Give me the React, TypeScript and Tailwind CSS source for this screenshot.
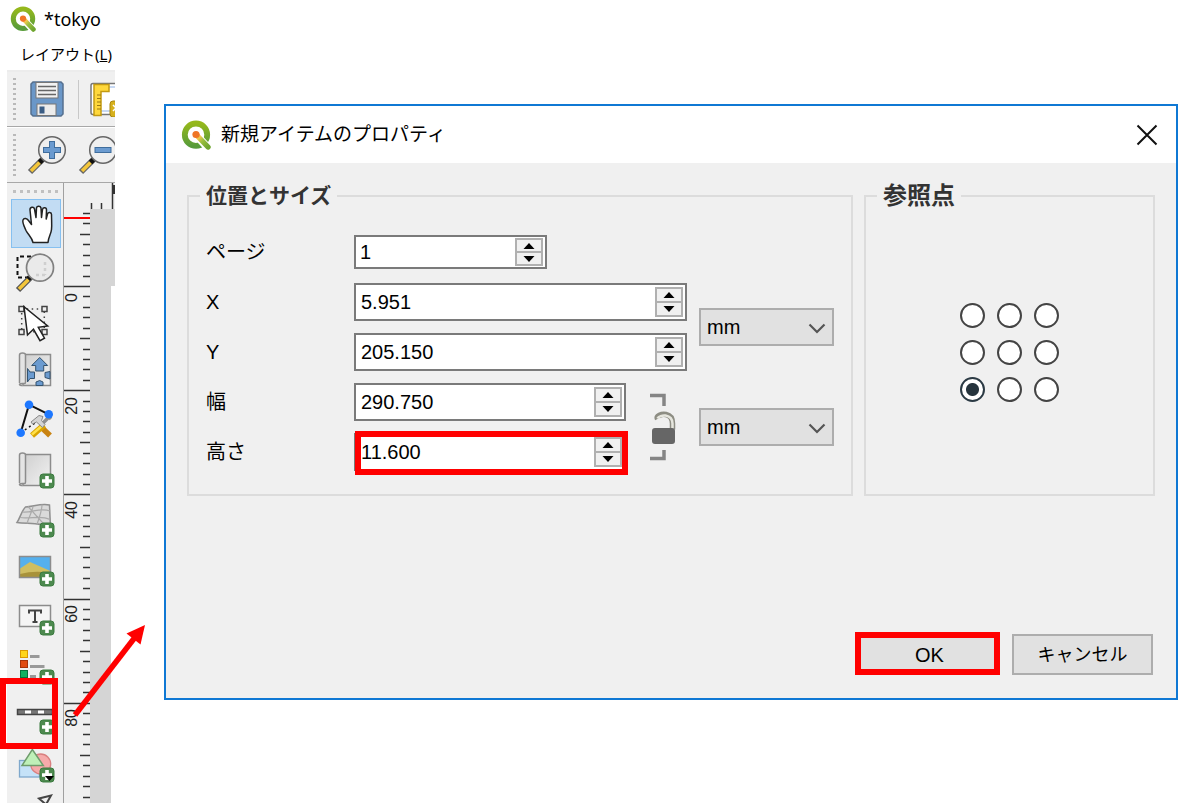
import React from "react";

const dialogFont = "font-['Liberation_Sans','Noto_Sans_CJK_JP',sans-serif]";
const kanaFont = "font-['Noto_Sans','Noto_Sans_CJK_JP',sans-serif]";

function QgisLogo({ className }: { className: string }) {
  return (
    <svg className={className} viewBox="0 0 30 30" fill="none" aria-hidden="true">
      <defs>
        <linearGradient id="leaf" x1="0" y1="0" x2="0" y2="1">
          <stop offset="0" stopColor="#95b81c" />
          <stop offset="1" stopColor="#589c3a" />
        </linearGradient>
        <linearGradient id="tail" x1="14" y1="14" x2="27" y2="27" gradientUnits="userSpaceOnUse">
          <stop offset="0" stopColor="#f07a1c" />
          <stop offset="0.3" stopColor="#f2c84c" />
          <stop offset="0.55" stopColor="#9bbf3e" />
          <stop offset="1" stopColor="#6fa52f" />
        </linearGradient>
      </defs>
      <circle cx="15" cy="14.700" r="11.200" stroke="url(#leaf)" strokeWidth="5.800" />
      <path d="M17.500 17.500 28.500 29.500" stroke="#fff" strokeWidth="8" />
      <path d="m16 15.500 11 11.500" stroke="url(#tail)" strokeWidth="5.400" strokeLinecap="round" />
      <circle cx="15" cy="14.500" r="3.600" fill="#ef7526" />
    </svg>
  );
}

function Badge({ y }: { y: number }) {
  return (
    <g>
      <rect x="29" y={y - 7} width="14" height="14" rx="3" fill="#4d8a4f" stroke="#3b7a3f" />
      <path d={`M36 ${y - 5}v10M31 ${y}h10`} stroke="#fff" strokeWidth="3.6" />
    </g>
  );
}

function Sheet() {
  return (
    <g stroke="#8c8c8c" strokeWidth="1.5">
      <path d="M12 8.500h27.500v31H12z" fill="url(#paper)" />
      <path d="M8.500 37V9q0-2 3-2t3 2v27q0 1.500-1 1.500H11q-2.500 0-2.500 1 0 1 3 1" fill="#e4e4e4" />
    </g>
  );
}

function HandIcon() {
  return (
    <path
      d="M22 43.500c-1-5-5-8-7-12-1.500-3.500-4-8-3-10.500 1-2.500 4-1.500 5.500.5l3 4L19 11c-.3-3 3.700-4 4.500-1l1.500 8.500.5-9.500c.2-2.500 4-2.500 4.500 0l.5 9.500 1-8c.4-2.500 4-2.300 4 .3l-.3 9.200 1.300-5c.6-2.300 4-2 4 .5 0 6 .5 10 0 15-.4 4.500-3 7-3.500 13z"
      fill="#fff"
      stroke="#222"
      strokeWidth="1.500"
      strokeLinejoin="round"
    />
  );
}

function ZoomAreaIcon() {
  return (
    <g fill="none">
      <path d="M20 8.500H6.500v21H18" stroke="#111" strokeWidth="2" strokeDasharray="4 3" />
      <path d="M20 29 7 42" stroke="#555" strokeWidth="6" />
      <path d="M17.500 31.500 8 41" stroke="#f4c63a" strokeWidth="3.500" />
      <path d="m21 27-4 4" stroke="#111" strokeWidth="5" />
      <circle cx="29" cy="19.700" r="13.500" fill="#eaeaea" stroke="#808080" strokeWidth="1.700" />
      <path d="M34 14v13M34 27H24" stroke="#cfcfcf" strokeWidth="2.500" strokeDasharray="3 3" />
    </g>
  );
}

function SelectIcon() {
  return (
    <g fill="none" stroke="#444" strokeWidth="1.500">
      <rect x="10.700" y="12" width="22.600" height="22.700" strokeDasharray="1.500 3.500" />
      <g fill="#f0f0f0">
        <rect x="8" y="9.500" width="5" height="5" />
        <rect x="31" y="9.500" width="5" height="5" />
        <rect x="8" y="32.500" width="5" height="5" />
        <rect x="31" y="32.500" width="5" height="5" />
      </g>
      <path
        d="m13 9.700 3.500 28.300 6-5.700 6.500 11.400 4.500-2.500-6.200-10.900 9.400-1.300z"
        fill="#fff"
        stroke="#222"
      />
    </g>
  );
}

function MoveContentIcon() {
  return (
    <g>
      <Sheet />
      <g fill="#6b9bd0" stroke="#34536f" strokeWidth="1">
        <path d="m28.700 11.500 8 8h-4V25h-8v-5.500h-4z" />
        <path d="M16.500 22.500 19 26h4.500v6.500H19l-2.500 3.500z" />
        <path d="M39 25.500V33l-5-1.500v-5z" />
        <path d="M25 39.500v-3.500l3.700-1.500 3.300 1.500v3.500z" />
      </g>
    </g>
  );
}

function EditNodesIcon() {
  return (
    <g fill="none">
      <path d="M9.700 35.700 18 7.700l19.700 9.600" stroke="#111" strokeWidth="2" />
      <path d="M9.700 35.700 27 24" stroke="#111" strokeWidth="1.500" strokeDasharray="2 3" />
      <path d="m29 29 10 9.500" stroke="#c98312" strokeWidth="5.500" />
      <path d="m31 27 7-7 2 2" stroke="#8f8f8f" strokeWidth="3.500" />
      <path d="M21 38.500 33 28" stroke="#d9a400" strokeWidth="6" />
      <path d="M21 37.500 32 28" stroke="#ffe14a" strokeWidth="2.500" />
      <path d="m20 25 8-6.500 4 1-1.500 4 3.500 4-2.500 3-6-5.500-4 2z" fill="#d4d4d4" stroke="#888" />
      <g fill="#1e78ff">
        <circle cx="18" cy="7.700" r="4.300" />
        <circle cx="37.700" cy="17.300" r="4.300" />
        <circle cx="9.700" cy="35.700" r="4.300" />
      </g>
    </g>
  );
}

function AddMapIcon() {
  return (
    <g>
      <Sheet />
      <Badge y={35} />
    </g>
  );
}

function Add3dIcon() {
  return (
    <g>
      <path
        d="M14.500 12c8-.5 16-4 24-2l1 23c-9-6-22-4-33.500-5.500C9 23 11 15 14.500 12z"
        fill="#dadada"
        stroke="#8f8f8f"
        strokeWidth="1.500"
      />
      <path
        d="M11.500 17c9 1 18-5 27.500-1M9 22.500c10 2 20-3 30 2M22 11.500c-1 6-4 10-6 17M31 9.500c0 7-3 13-5 20M17 11.500l18 20"
        fill="none"
        stroke="#aaa"
        strokeWidth="1.200"
      />
      <Badge y={35} />
    </g>
  );
}

function AddPictureIcon() {
  return (
    <g>
      <rect x="8.500" y="10.500" width="31" height="21" fill="#55b0ee" />
      <path d="M9 22.500 19 16l20.500 9v6H9z" fill="#cfbe62" />
      <path d="M9 28q15-4 30.500-1v4H9z" fill="#a8923a" />
      <rect x="8.500" y="10.500" width="31" height="21" fill="none" stroke="#8c8c8c" strokeWidth="1.500" />
      <Badge y={33} />
    </g>
  );
}

function AddLabelIcon() {
  return (
    <g>
      <rect x="8.500" y="10.500" width="31" height="21" fill="#f5f5f5" stroke="#8c8c8c" strokeWidth="1.500" />
      <path d="M18 18.500v-3h12v3M24 15.500V27M21.500 27h5" fill="none" stroke="#444" strokeWidth="2" />
      <Badge y={33} />
    </g>
  );
}

function AddLegendIcon() {
  return (
    <g>
      <rect x="9.500" y="6.500" width="7" height="7" fill="#ffd51a" stroke="#dc9a00" />
      <rect x="9.500" y="16.500" width="7" height="7" fill="#e04a10" stroke="#a63208" />
      <rect x="9.500" y="26.500" width="7" height="7" fill="#12b060" stroke="#08703a" />
      <path d="M19 12.500h9.500M19 22.500h14.500M19 32.500h6" stroke="#999" strokeWidth="3" />
      <Badge y={33} />
    </g>
  );
}

function AddScaleBarIcon() {
  return (
    <g>
      <rect x="6.500" y="16.500" width="35" height="5" fill="#777" stroke="#444" strokeWidth="1.500" />
      <path d="M14 19h6M27 19h6" stroke="#fff" strokeWidth="3" />
      <Badge y={34} />
    </g>
  );
}

function AddShapeIcon() {
  return (
    <g>
      <rect x="8.500" y="18.500" width="20" height="16.500" fill="#c5e2f8" stroke="#7fa8cc" strokeWidth="1.300" />
      <circle cx="29.700" cy="22" r="10" fill="#f6aaaa" stroke="#d98080" strokeWidth="1.300" />
      <path d="m21.300 7.500 11 16h-21.300z" fill="#bff0b8" stroke="#6f9c6c" strokeWidth="1.500" />
      <Badge y={33} />
      <path d="M34 34h9l-4.500 5z" fill="#000" />
    </g>
  );
}

type Tool = { name: string; icon: React.ReactNode; active?: boolean; marked?: boolean };

const toolGroups: Tool[][] = [
  [
    { name: "コンテンツをパン", icon: <HandIcon />, active: true },
    { name: "ズーム", icon: <ZoomAreaIcon /> },
    { name: "アイテムを選択", icon: <SelectIcon /> },
    { name: "コンテンツを移動", icon: <MoveContentIcon /> },
  ],
  [
    { name: "ノードを編集", icon: <EditNodesIcon /> },
    { name: "地図を追加", icon: <AddMapIcon /> },
    { name: "3Dマップを追加", icon: <Add3dIcon /> },
  ],
  [
    { name: "画像を追加", icon: <AddPictureIcon /> },
    { name: "ラベルを追加", icon: <AddLabelIcon /> },
    { name: "凡例を追加", icon: <AddLegendIcon /> },
    { name: "スケールバーを追加", icon: <AddScaleBarIcon />, marked: true },
    { name: "図形を追加", icon: <AddShapeIcon /> },
  ],
];

function ToolButton({ tool }: { tool: Tool }) {
  return (
    <button
      type="button"
      aria-label={tool.name}
      className={
        tool.active
          ? "relative block h-[49px] w-[50px] bg-[#c2dcf3] outline-1 -outline-offset-1 outline-[#86c0f0]"
          : "relative block h-[49px] w-[50px]"
      }
    >
      <svg className="block h-[49px] w-[50px]" viewBox="0 0 50 49" aria-hidden="true">
        {tool.icon}
      </svg>
      {tool.marked && (
        <span className="absolute -top-[15px] right-[3px] -bottom-[7px] -left-[11px] z-10 border-[6px] border-[#ff0000]" />
      )}
    </button>
  );
}

function Grip() {
  return (
    <span className="flex flex-col gap-[3px]">
      {Array.from({ length: 9 }, (_, i) => (
        <span key={i} className="h-[2px] w-[3px] bg-[#b9b9b9]" />
      ))}
    </span>
  );
}

function Magnifier({ minus }: { minus?: boolean }) {
  return (
    <svg className="h-10 w-10 shrink-0" viewBox="0 0 40 40" fill="none" aria-hidden="true">
      <path d="M15 25 3 37" stroke="#666" strokeWidth="6" />
      <path d="M13 27 4 36" stroke="#f4c63a" strokeWidth="3.500" />
      <path d="m16.500 23.500-4 4" stroke="#111" strokeWidth="5" />
      <circle cx="25" cy="15" r="13.300" fill="#efefef" stroke="#666" strokeWidth="1.500" />
      <path
        d={minus ? "M16.500 15h17" : "M25 6v18M16 15h18"}
        stroke="#3f6d9c"
        strokeWidth="6"
      />
      <path d={minus ? "M17.500 15h15" : "M25 7v16M17 15h16"} stroke="#6b9bd0" strokeWidth="4" />
    </svg>
  );
}

function SaveIcon() {
  return (
    <svg className="h-9 w-[34px] shrink-0" viewBox="0 0 34 36" aria-hidden="true">
      <path d="M3 1h28l2 2v30l-2 2H3l-2-2V3z" fill="#6a97c8" stroke="#55708f" strokeWidth="1.500" />
      <rect x="6" y="1.500" width="22" height="15.500" fill="#f2f2f2" stroke="#777" />
      <path d="M8 5.500h18M8 9.500h18M8 13.500h18" stroke="#666" strokeWidth="1.300" />
      <rect x="7" y="23" width="19" height="11.500" fill="#ececec" stroke="#777" />
      <rect x="9.500" y="25.500" width="5" height="7" fill="#3a5d85" />
    </svg>
  );
}

function LayoutIcon() {
  return (
    <svg className="h-9 w-9 shrink-0" viewBox="0 0 36 36" aria-hidden="true">
      <rect x="1" y="2.500" width="34" height="31" rx="2" fill="#fff" stroke="#777" strokeWidth="1.500" />
      <path d="M10 30h25M19 6h16" stroke="#8fb2e6" />
      <path d="M4 3.500h15v7h-8v24H4z" fill="#ffd83c" stroke="#c39a12" strokeWidth="1.500" />
      <path d="M7 14h4M7 17.500h4M7 21h4M7 24.500h4M7 28h4" stroke="#9c7a10" />
      <rect x="20" y="20" width="14" height="16" rx="3" fill="#d6b01c" stroke="#a88610" />
      <path d="M23 24l3 3-3 3" fill="none" stroke="#fff" strokeWidth="1.500" />
    </svg>
  );
}

function Rulers() {
  const zero = 103;
  const step = 10.42;
  const ticks = Array.from({ length: 58 }, (_, i) => i - 7);
  return (
    <svg className="block h-[620px] w-[51px]" viewBox="0 0 51 620" aria-hidden="true">
      <rect width="51" height="27" fill="#f0f0f0" />
      <rect y="26" width="26" height="594" fill="#f0f0f0" />
      <path d="M26 26h25v77h-4v517H26z" fill="#d5d5d5" />
      <path d="M27.500 20v6M37.500 20v6M48.500 0v26" stroke="#333" strokeWidth="1.500" />
      <path d="M50 2v9" stroke="#333" strokeWidth="2" />
      {ticks.map((k) => {
        const y = Math.round(zero + k * step);
        const x = k >= 0 && k % 10 === 0 ? 0 : k % 5 === 0 ? 16 : 19;
        return <path key={k} d={`M${x} ${y}.5H26`} stroke="#333" strokeWidth="1.500" />;
      })}
      <path d="M0 35h26" stroke="#ff0000" strokeWidth="2" />
      {["0", "20", "40", "60", "80"].map((t, i) => (
        <text
          key={t}
          transform={`translate(13 ${110 + i * 104}) rotate(-90)`}
          textAnchor="end"
          fontFamily="Liberation Sans, sans-serif"
          fontSize="16"
          fill="#222"
        >
          {t}
        </text>
      ))}
    </svg>
  );
}

function LayoutWindow() {
  return (
    <aside className="w-[115px] shrink-0 overflow-hidden">
      <header className={`flex h-[38px] items-center gap-2 pl-[10px] text-lg text-black ${kanaFont}`}>
        <QgisLogo className="h-[26px] w-[26px]" />
        <h1>*tokyo</h1>
      </header>
      <nav className={`flex h-8 items-center pl-5 text-[15px] ${kanaFont}`}>
        <a href="#layout" className="whitespace-nowrap text-black">
          レイアウト(<span className="underline">L</span>)
        </a>
      </nav>
      <div className="ml-[7px]">
        <div className="flex h-[57px] items-center gap-[14px] border-t-2 border-b border-t-[#ececec] border-b-[#a8a8a8] bg-[#f0f0f0] pl-[6px]">
          <Grip />
          <button type="button" aria-label="保存">
            <SaveIcon />
          </button>
          <span className="h-[39px] w-px shrink-0 bg-[#c8c8c8]" />
          <button type="button" aria-label="新規レイアウト" className="-ml-[3px]">
            <LayoutIcon />
          </button>
        </div>
        <div className="flex h-14 items-center gap-[11px] border-t border-b border-t-white border-b-[#a8a8a8] bg-[#f0f0f0] pl-[6px]">
          <Grip />
          <button type="button" aria-label="拡大">
            <Magnifier />
          </button>
          <button type="button" aria-label="縮小">
            <Magnifier minus />
          </button>
        </div>
        <div className="flex">
          <div className="w-[57px] shrink-0 border-r border-[#a0a0a0] bg-[#f0f0f0] pl-1">
            <div className="flex h-4 items-center gap-1 pl-[2px]">
              {Array.from({ length: 7 }, (_, i) => (
                <span key={i} className="h-[3px] w-[3px] bg-[#c0c0c0]" />
              ))}
            </div>
            <div className="flex flex-col gap-[2px]">
              {toolGroups.map((group, i) => (
                <div key={i}>
                  {group.map((tool) => (
                    <ToolButton key={tool.name} tool={tool} />
                  ))}
                </div>
              ))}
            </div>
            <svg className="block h-3 w-[50px]" viewBox="0 0 50 12" aria-hidden="true">
              <path d="m28 7.500 12-3-5 9z" fill="#f0f0f0" stroke="#444" strokeWidth="2" />
            </svg>
          </div>
          <Rulers />
        </div>
      </div>
    </aside>
  );
}

function SpinBox({
  id,
  label,
  value,
  short,
  marked,
}: {
  id: string;
  label: string;
  value: string;
  short?: boolean;
  marked?: boolean;
}) {
  return (
    <div className="flex h-[38px] items-center">
      <label htmlFor={id} className="w-[148px] shrink-0 text-xl text-black">
        {label}
      </label>
      <div
        className={
          short
            ? "relative flex h-[34px] w-[193px] border-2 border-[#7a7a7a] bg-white p-px pr-[2px]"
            : "relative flex h-[38px] min-w-0 flex-1 border-2 border-[#7a7a7a] bg-white p-[2px]"
        }
      >
        <input
          id={id}
          type="text"
          defaultValue={value}
          className="min-w-0 flex-1 bg-transparent pl-[3px] text-xl leading-7 text-black outline-none"
        />
        <span className="flex w-7 flex-col border-2 border-[#b0b0b0] bg-[#f0f0f0]">
          <button
            type="button"
            aria-label={`${label} を増やす`}
            className="flex flex-1 items-center justify-center border-b border-[#b0b0b0]"
          >
            <svg className="h-[6px] w-3" viewBox="0 0 12 6" aria-hidden="true">
              <path d="M6 0l5.500 6H.5z" />
            </svg>
          </button>
          <button
            type="button"
            aria-label={`${label} を減らす`}
            className="flex flex-1 items-center justify-center border-t border-[#b0b0b0]"
          >
            <svg className="h-[6px] w-3" viewBox="0 0 12 6" aria-hidden="true">
              <path d="M6 6 .5 0h11z" />
            </svg>
          </button>
        </span>
        {marked && (
          <span className="pointer-events-none absolute -top-1 -right-1 -bottom-[6px] -left-px border-[6px] border-[#ff0000]" />
        )}
      </div>
    </div>
  );
}

function UnitSelect({ label }: { label: string }) {
  return (
    <div className="relative w-[135px] shrink-0 self-center">
      <select
        aria-label={label}
        className="block h-[38px] w-full appearance-none border-2 border-[#adadad] bg-[#e1e1e1] pl-[6px] text-xl leading-7 text-black"
      >
        <option>mm</option>
      </select>
      <svg
        className="pointer-events-none absolute top-[15px] right-2 h-[11px] w-[18px]"
        viewBox="0 0 18 11"
        fill="none"
        aria-hidden="true"
      >
        <path d="m1.500 1.500 7.500 7.500 7.500-7.500" stroke="#555" strokeWidth="2.200" />
      </svg>
    </div>
  );
}

function LockToggle() {
  return (
    <button
      type="button"
      aria-label="縦横比を固定"
      className="flex w-[73px] shrink-0 items-center justify-center"
    >
      <svg className="h-[70px] w-[27px]" viewBox="0 0 27 70" fill="none" aria-hidden="true">
        <path d="M1 3.500h14V14M1 66.500h14V58" stroke="#858585" strokeWidth="3.500" />
        <path d="M8.500 27c-1.500-3 4-5.500 8.500-4.500 5 1 6.500 5 6.500 9v6" stroke="#8d8d83" strokeWidth="5.500" />
        <path d="M8.500 26.500c1-2 5-3.500 8-3 5 1 7 4.500 7 8v6" stroke="#e6e6de" strokeWidth="2.500" />
        <rect x="3" y="36" width="23" height="16" rx="3" fill="#666" />
      </svg>
    </button>
  );
}

const anchors = ["左上", "上", "右上", "左", "中央", "右", "左下", "下", "右下"];

function ItemDialog() {
  return (
    <section
      role="dialog"
      aria-labelledby="dialog-title"
      className={`mt-[104px] ml-[49px] min-w-0 flex-1 self-start border-2 border-[#0f78d4] bg-[#f0f0f0] ${dialogFont}`}
    >
      <header className="flex h-[57px] items-center bg-white pr-[18px] pl-[15px]">
        <QgisLogo className="h-[30px] w-[30px]" />
        <h2 id="dialog-title" className={`ml-[10px] flex-1 text-[19px] text-black ${kanaFont}`}>
          新規アイテムのプロパティ
        </h2>
        <button type="button" aria-label="閉じる">
          <svg className="h-[22px] w-[22px]" viewBox="0 0 22 22" fill="none" aria-hidden="true">
            <path d="m1.500 1.500 19 19M20.500 1.500l-19 19" stroke="#111" strokeWidth="2" />
          </svg>
        </button>
      </header>
      <form className="px-[21px] pt-[19px] pb-[23px]" onSubmit={(e) => e.preventDefault()}>
        <div className="flex gap-[11px]">
          <fieldset className="min-w-0 flex-[628] border-2 border-[#dcdcdc] px-[17px] pb-[23px]">
            <legend className="-ml-[6px] px-[6px] text-[21px] leading-7 font-bold text-[#333]">
              位置とサイズ
            </legend>
            <div className="flex flex-col gap-3 pt-[23px]">
              <SpinBox id="page" label="ページ" value="1" short />
              <div className="flex gap-3">
                <div className="flex min-w-0 flex-1 flex-col gap-3">
                  <SpinBox id="x" label="X" value="5.951" />
                  <SpinBox id="y" label="Y" value="205.150" />
                </div>
                <UnitSelect label="位置の単位" />
              </div>
              <div className="flex">
                <div className="flex min-w-0 flex-1 flex-col gap-3">
                  <SpinBox id="width" label="幅" value="290.750" />
                  <SpinBox id="height" label="高さ" value="11.600" marked />
                </div>
                <LockToggle />
                <UnitSelect label="サイズの単位" />
              </div>
            </div>
          </fieldset>
          <fieldset className="grid min-w-0 flex-[253] place-content-center border-2 border-[#dcdcdc] px-[17px]">
            <legend className="-ml-[6px] px-[6px] text-2xl leading-7 font-bold text-[#333]">
              参照点
            </legend>
            <div className="grid grid-cols-3 gap-3">
              {anchors.map((name, i) => (
                <input
                  key={name}
                  type="radio"
                  name="anchor"
                  aria-label={name}
                  defaultChecked={i === 6}
                  className="h-[25px] w-[25px] appearance-none rounded-full border-2 border-[#444] bg-white checked:border-[#2b3a44] checked:bg-[radial-gradient(circle,#26343d_6px,#fff_7px)]"
                />
              ))}
            </div>
          </fieldset>
        </div>
        <div className="mt-[138px] flex justify-end gap-3 pr-[2px]">
          <div className="relative">
            <button
              type="submit"
              className="h-[41px] w-[141px] border-2 border-[#0078d7] bg-[#e1e1e1] text-xl text-black"
            >
              OK
            </button>
            <span className="pointer-events-none absolute -top-[2px] right-0 bottom-0 -left-1 border-[6px] border-[#ff0000]" />
          </div>
          <button
            type="button"
            className="h-[41px] w-[141px] border-2 border-[#adadad] bg-[#e1e1e1] text-lg text-black"
          >
            キャンセル
          </button>
        </div>
      </form>
    </section>
  );
}

export default function App() {
  return (
    <main className="relative flex min-h-screen overflow-hidden bg-white">
      <svg width="0" height="0" className="absolute" aria-hidden="true">
        <defs>
          <linearGradient id="paper" x1="0" y1="0" x2="1" y2="1">
            <stop offset="0" stopColor="#cfcfcf" />
            <stop offset="1" stopColor="#f2f2f2" />
          </linearGradient>
        </defs>
      </svg>
      <LayoutWindow />
      <ItemDialog />
      <svg
        className="pointer-events-none absolute top-[620px] left-[70px] h-[100px] w-20"
        viewBox="0 0 80 100"
        aria-hidden="true"
      >
        <path d="M5 95 66 16" stroke="#ff0000" strokeWidth="5.500" />
        <path d="M75 5 56.500 13.500 70.500 24.500z" fill="#ff0000" />
      </svg>
    </main>
  );
}
